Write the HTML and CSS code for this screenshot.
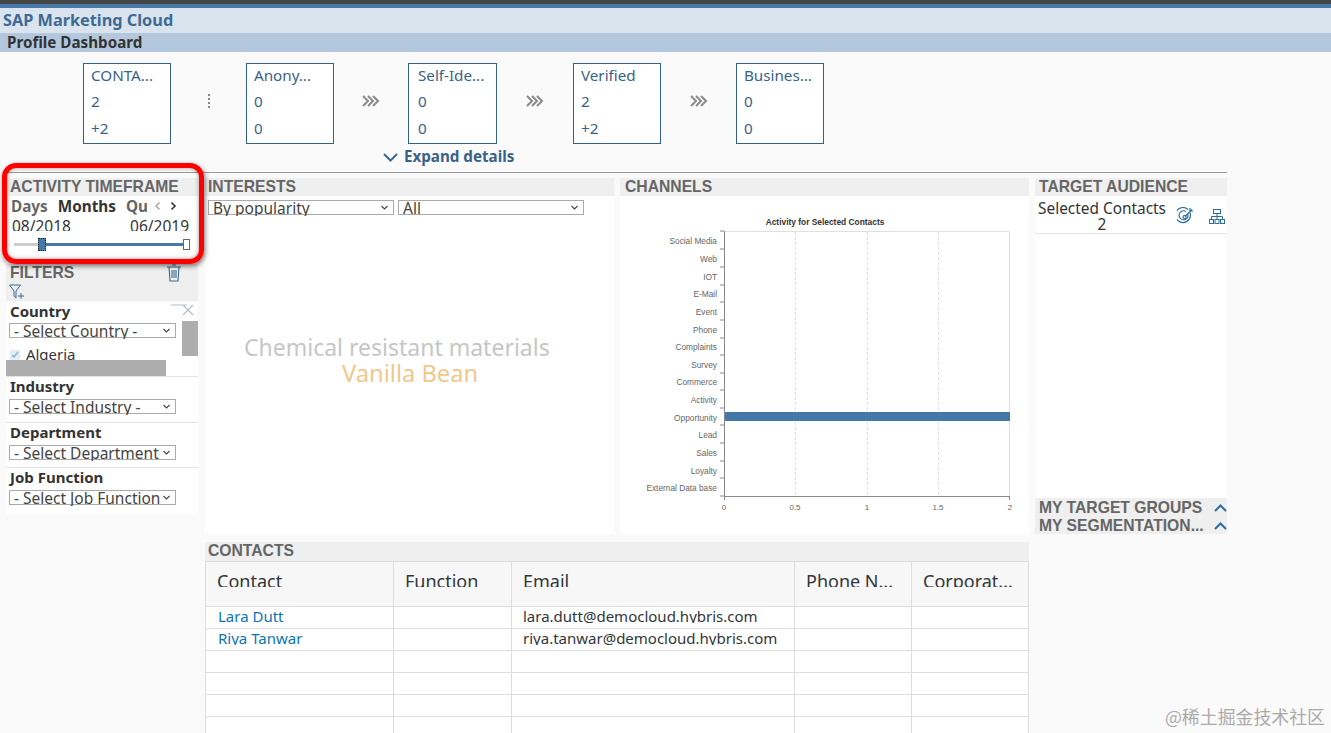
FILE: index.html
```html
<!DOCTYPE html>
<html lang="en">
<head>
    <meta charset="UTF-8">
    <title>Profile Dashboard</title>
    <link rel="stylesheet" href="styles.css">
</head>
<body>
    <div class="topline"></div>
    <div class="shell-title">SAP Marketing Cloud</div>
    <div class="page-title">Profile Dashboard</div>

    <div class="funnel">
        <div class="stage"><span>CONTA...</span><span>2</span><span>+2</span></div>
        <div class="step">
            <svg width="4" height="16" viewBox="0 0 4 16"><path d="M1 1h2v2H1zM1 5h2v2H1zM1 9h2v2H1zM1 13h2v2H1z" fill="#888"/></svg>
        </div>
        <div class="stage"><span>Anony...</span><span>0</span><span>0</span></div>
        <div class="step step-narrow">
            <svg width="18" height="12" viewBox="0 0 18 12"><path d="M1 1l5 5-5 5M6 1l5 5-5 5M11 1l5 5-5 5" fill="none" stroke="#8a8a8a" stroke-width="2"/></svg>
        </div>
        <div class="stage stage-wide"><span>Self-Ide...</span><span>0</span><span>0</span></div>
        <div class="step step-wide">
            <svg width="18" height="12" viewBox="0 0 18 12"><path d="M1 1l5 5-5 5M6 1l5 5-5 5M11 1l5 5-5 5" fill="none" stroke="#8a8a8a" stroke-width="2"/></svg>
        </div>
        <div class="stage"><span>Verified</span><span>2</span><span>+2</span></div>
        <div class="step">
            <svg width="18" height="12" viewBox="0 0 18 12"><path d="M1 1l5 5-5 5M6 1l5 5-5 5M11 1l5 5-5 5" fill="none" stroke="#8a8a8a" stroke-width="2"/></svg>
        </div>
        <div class="stage"><span>Busines...</span><span>0</span><span>0</span></div>
    </div>

    <div class="expand">
        <svg width="15" height="9" viewBox="0 0 15 9"><path d="M1 1l6.500 6.500L14 1" fill="none" stroke="#3a6a94" stroke-width="2"/></svg>
        Expand details
    </div>

    <div class="board">
        <div class="side">
            <div class="highlight"></div>
            <div class="head">ACTIVITY TIMEFRAME</div>
            <div class="timeframe">
                <div class="tabs">
                    <span class="tab">Days</span>
                    <span class="tab tab-on">Months</span>
                    <span class="tab tab-cut">Quarters</span>
                    <svg class="arrow" width="7" height="10" viewBox="0 0 7 10"><path d="M5.500 1.500L2 5l3.500 3.500" fill="none" stroke="#aaa" stroke-width="1.600"/></svg>
                    <svg class="arrow" width="7" height="10" viewBox="0 0 7 10"><path d="M1.500 1.500L5 5 1.500 8.500" fill="none" stroke="#333" stroke-width="1.600"/></svg>
                </div>
                <div class="dates"><span>08/2018</span><span>06/2019</span></div>
                <div class="slider">
                    <div class="track-off"></div>
                    <div class="track-on"></div>
                    <div class="grip"></div>
                    <div class="grip-end"></div>
                </div>
            </div>

            <div class="filters-head">
                <div class="filters-title">
                    <span>FILTERS</span>
                    <svg width="16" height="18" viewBox="0 0 16 18"><path d="M1 3h14M3 3l1 14h8l1-14M6 1h4M6 6v8M8 6v8M10 6v8" fill="none" stroke="#3a6a94" stroke-width="1.100"/></svg>
                </div>
                <svg class="filter-add" width="17" height="16" viewBox="0 0 17 16"><path d="M.5 1h11L7 7v7L5 12V7zM12 9v6M9 12h6" fill="none" stroke="#3a6a94" stroke-width="1"/></svg>
            </div>

            <div class="filter filter-country">
                <div class="filter-label">Country</div>
                <svg class="close" width="24" height="12" viewBox="0 0 24 12"><path d="M0 1h16M12 1l10 10M22 1L12 11" fill="none" stroke="#b5bcc4" stroke-width="1.200"/></svg>
                <div class="pick"><span>- Select Country -</span><svg width="7" height="5" viewBox="0 0 7 5"><path d="M.5 1l3 3 3-3" fill="none" stroke="#444" stroke-width="1.100"/></svg></div>
                <div class="thumb"></div>
                <div class="check-row">
                    <svg width="10" height="10" viewBox="0 0 10 10"><rect width="10" height="10" fill="#e4edf5"/><path d="M2 5l2 2 4-5" fill="none" stroke="#7fb2de" stroke-width="1.300"/></svg>
                    Algeria
                </div>
                <div class="hbar"></div>
            </div>
            <div class="filter">
                <div class="filter-label">Industry</div>
                <div class="pick"><span>- Select Industry -</span><svg width="7" height="5" viewBox="0 0 7 5"><path d="M.5 1l3 3 3-3" fill="none" stroke="#444" stroke-width="1.100"/></svg></div>
            </div>
            <div class="filter">
                <div class="filter-label">Department</div>
                <div class="pick"><span>- Select Department -</span><svg width="7" height="5" viewBox="0 0 7 5"><path d="M.5 1l3 3 3-3" fill="none" stroke="#444" stroke-width="1.100"/></svg></div>
            </div>
            <div class="filter">
                <div class="filter-label">Job Function</div>
                <div class="pick"><span>- Select Job Function -</span><svg width="7" height="5" viewBox="0 0 7 5"><path d="M.5 1l3 3 3-3" fill="none" stroke="#444" stroke-width="1.100"/></svg></div>
            </div>
        </div>

        <div class="panel">
            <div class="head">INTERESTS</div>
            <div class="interest-body">
                <div class="interest-picks">
                    <div class="pick pick-wide"><span>By popularity</span><svg width="7" height="5" viewBox="0 0 7 5"><path d="M.5 1l3 3 3-3" fill="none" stroke="#444" stroke-width="1.100"/></svg></div>
                    <div class="pick pick-wide"><span>All</span><svg width="7" height="5" viewBox="0 0 7 5"><path d="M.5 1l3 3 3-3" fill="none" stroke="#444" stroke-width="1.100"/></svg></div>
                </div>
                <div class="cloud">
                    <div class="word">Chemical resistant materials</div>
                    <div class="word word-accent">Vanilla Bean</div>
                </div>
            </div>
        </div>

        <div class="panel">
            <div class="head head-channels">CHANNELS</div>
            <div class="chart-body">
                <svg class="chart" width="409" height="337" viewBox="620 197 409 337">
                    <text class="chart-title" x="825" y="225">Activity for Selected Contacts</text>
                    <path d="M724.500 231.500H1009.500V496" fill="none" stroke="#e0e0e0"/>
                    <path d="M795.500 232V496M867.500 232V496M938.500 232V496" fill="none" stroke="#ddd" stroke-dasharray="3 2"/>
                    <rect x="724" y="412" width="286" height="9" fill="#4478a8"/>
                    <path d="M724.500 231v265.500H1010M724 231h-4M724 249h-4M724 267h-4M724 285h-4M724 302h-4M724 320h-4M724 338h-4M724 355h-4M724 373h-4M724 390h-4M724 408h-4M724 425h-4M724 443h-4M724 461h-4M724 478h-4M724 496h-4M724.500 496v4M1009.500 496v4" fill="none" stroke="#888"/>
                    <g class="chart-y">
                        <text x="717" y="244">Social Media</text>
                        <text x="717" y="262">Web</text>
                        <text x="717" y="280">IOT</text>
                        <text x="717" y="297">E-Mail</text>
                        <text x="717" y="315">Event</text>
                        <text x="717" y="333">Phone</text>
                        <text x="717" y="350">Complaints</text>
                        <text x="717" y="368">Survey</text>
                        <text x="717" y="385">Commerce</text>
                        <text x="717" y="403">Activity</text>
                        <text x="717" y="421">Opportunity</text>
                        <text x="717" y="438">Lead</text>
                        <text x="717" y="456">Sales</text>
                        <text x="717" y="474">Loyalty</text>
                        <text x="717" y="491">External Data base</text>
                    </g>
                    <g class="chart-x">
                        <text x="724" y="510">0</text>
                        <text x="795" y="510">0.5</text>
                        <text x="867" y="510">1</text>
                        <text x="938" y="510">1.5</text>
                        <text x="1010" y="510">2</text>
                    </g>
                </svg>
            </div>
        </div>

        <div class="panel">
            <div class="head head-target">TARGET AUDIENCE</div>
            <div class="audience">
                <div class="audience-top">
                    <div class="selected">Selected Contacts<br>2</div>
                    <svg class="target-icon" width="18" height="18" viewBox="0 0 18 18"><g fill="none" stroke="#2f6c9e" stroke-width="1.200"><path d="M13 5.500A7.500 7.500 0 1 1 11 2.500"/><path d="M11 7.500A4.500 4.500 0 1 1 9 4.500"/><circle cx="7.500" cy="10" r="1.500"/><path d="M8 9.500l7-7M13 1v3h3"/></g></svg>
                    <svg class="tree-icon" width="16" height="15" viewBox="0 0 16 15"><g fill="none" stroke="#2f6c9e"><rect x="4.500" y=".5" width="7" height="4"/><path d="M8 4.500v3M2.500 10V7.500h11V10M8 7.500V10"/><rect x=".5" y="10.500" width="4" height="4"/><rect x="6" y="10.500" width="4" height="4"/><rect x="11.500" y="10.500" width="4" height="4"/></g></svg>
                </div>
            </div>
            <div class="head head-fold">
                <span>MY TARGET GROUPS</span>
                <svg width="13" height="8" viewBox="0 0 13 8"><path d="M1 7l5.500-5.500L12 7" fill="none" stroke="#2f6c9e" stroke-width="2"/></svg>
            </div>
            <div class="head head-fold">
                <span>MY SEGMENTATION...</span>
                <svg width="13" height="8" viewBox="0 0 13 8"><path d="M1 7l5.500-5.500L12 7" fill="none" stroke="#2f6c9e" stroke-width="2"/></svg>
            </div>
        </div>

        <div class="contacts">
            <div class="head">CONTACTS</div>
            <table class="grid">
                <thead>
                    <tr><th class="col-name"><div>Contact</div></th><th class="col-func"><div>Function</div></th><th class="col-mail"><div>Email</div></th><th class="col-phone"><div>Phone N...</div></th><th><div>Corporat...</div></th></tr>
                </thead>
                <tbody>
                    <tr><td><div><a href="#">Lara Dutt</a></div></td><td></td><td><div class="mail">lara.dutt@democloud.hybris.com</div></td><td></td><td></td></tr>
                    <tr><td><div><a href="#">Riya Tanwar</a></div></td><td></td><td><div class="mail">riya.tanwar@democloud.hybris.com</div></td><td></td><td></td></tr>
                    <tr><td></td><td></td><td></td><td></td><td></td></tr>
                    <tr><td></td><td></td><td></td><td></td><td></td></tr>
                    <tr><td></td><td></td><td></td><td></td><td></td></tr>
                    <tr><td></td><td></td><td></td><td></td><td></td></tr>
                </tbody>
            </table>
        </div>
    </div>

    <div class="watermark">@稀土掘金技术社区</div>
</body>
</html>
```

FILE: styles.css
```css
body {
    margin: 0;
    height: 733px;
    overflow: hidden;
    background: #fafafa;
    font-family: "Noto Sans", sans-serif;
    font-size: 15px;
    color: #32363a;
    position: relative;
}

.topline {
    height: 4px;
    background: #454545;
    border-bottom: 4px solid #4679a8;
}

.shell-title {
    height: 25px;
    line-height: 25px;
    padding-left: 3px;
    background: #d9e4ef;
    color: #3f6a94;
    font-size: 16.300px;
    font-weight: 700;
}

.page-title {
    height: 19px;
    line-height: 19px;
    padding-left: 7px;
    background: #b4c8dd;
    color: #333;
    font-size: 15.200px;
    font-weight: 700;
}

/* funnel */
.funnel {
    display: flex;
    margin: 11px 0 0 83px;
}

.stage {
    width: 88px;
    height: 81px;
    box-sizing: border-box;
    border: 1px solid #346187;
    background: #fff;
    padding: 0 0 0 7px;
    color: #3a6288;
    display: flex;
    flex-direction: column;
    font-size: 15.200px;
}

.stage-wide {
    width: 89px;
    padding-left: 9px;
}

.stage span {
    height: 26.500px;
    line-height: 23px;
}

.step {
    width: 75px;
    display: flex;
    align-items: center;
    justify-content: center;
    padding-bottom: 5px;
    box-sizing: border-box;
}

.step-narrow {
    width: 74px;
}

.step-wide {
    width: 76px;
}

.expand {
    height: 19px;
    margin-top: 3px;
    padding-left: 383px;
    line-height: 19px;
    color: #3a6288;
    font-size: 15.200px;
    font-weight: 700;
}

.expand svg {
    margin-right: 2px;
}

/* board */
.board {
    display: grid;
    grid-template-columns: 193px 409px 409px 192px;
    grid-template-rows: 356px auto;
    column-gap: 6px;
    row-gap: 8px;
    width: 1221px;
    margin: 6px 0 0 6px;
    padding-top: 5px;
    border-top: 1px solid #999;
}

.head {
    height: 18px;
    line-height: 18px;
    padding-left: 3px;
    background: #efefef;
    color: #666;
    font-family: "Liberation Sans", sans-serif;
    font-size: 15.700px;
    font-weight: 700;
    white-space: nowrap;
}

.head-channels {
    padding-left: 5px;
}

.head-target {
    padding-left: 4px;
}

.side {
    width: 192px;
    position: relative;
}

.side .head {
    padding-left: 4px;
}

.highlight {
    position: absolute;
    left: -4px;
    top: -15px;
    width: 192px;
    height: 91px;
    border: 5px solid #f00;
    border-radius: 14px;
    box-shadow: 1px 2px 5px rgba(0, 0, 0, 0.55), inset 0 0 4px rgba(0, 0, 0, 0.4);
    z-index: 2;
}

.timeframe {
    height: 68px;
    background: #fff;
    overflow: hidden;
}

.tabs {
    display: flex;
    align-items: center;
    height: 20px;
    padding-left: 5px;
    font-weight: 700;
    font-size: 15.300px;
    color: #666;
}

.tab {
    margin-right: 10px;
}

.tab-on {
    color: #333;
}

.tab-cut {
    width: 21px;
    overflow: hidden;
    margin-right: 7px;
    white-space: nowrap;
}

.arrow {
    margin-right: 9px;
}

.dates {
    display: flex;
    justify-content: space-between;
    padding: 0 9px 0 6px;
    height: 15px;
    line-height: 20px;
    overflow: hidden;
    font-size: 15.500px;
}

.slider {
    position: relative;
    height: 14px;
    margin-top: 6px;
}

.track-off {
    position: absolute;
    left: 8px;
    top: 6px;
    width: 26px;
    height: 3px;
    background: #ccc;
}

.track-on {
    position: absolute;
    left: 36px;
    top: 6px;
    width: 143px;
    height: 3px;
    background: #4679a8;
}

.grip {
    position: absolute;
    left: 32px;
    top: 1px;
    width: 6px;
    height: 11px;
    background: #4679a8;
    border: 1px dotted #222;
}

.grip-end {
    position: absolute;
    left: 177px;
    top: 2px;
    width: 5px;
    height: 9px;
    background: #fff;
    border: 1px solid #666;
}

.filters-head {
    height: 37px;
    background: #efefef;
    padding: 0 0 0 4px;
    box-sizing: border-box;
}

.filters-title {
    display: flex;
    justify-content: space-between;
    align-items: center;
    height: 17px;
    padding-right: 16px;
    color: #666;
    font-family: "Liberation Sans", sans-serif;
    font-size: 15.700px;
    font-weight: 700;
}

.filter-add {
    display: block;
    margin: 3px 0 0 -1px;
}

.filter {
    position: relative;
    background: #fff;
    height: 45.500px;
    box-sizing: border-box;
    padding: 0 0 0 3px;
    border-bottom: 1px solid #e2e2e2;
}

.filter:last-child {
    border-bottom: 0;
}

.filter-country {
    height: 75px;
    margin-top: 1px;
    overflow: hidden;
}

.filter-label {
    height: 22px;
    line-height: 19px;
    padding-left: 1px;
    font-weight: 700;
    color: #333;
}

.filter-country .filter-label {
    height: 21px;
}

.pick {
    display: flex;
    align-items: flex-start;
    width: 167px;
    height: 15px;
    padding: 0 5px 0 4px;
    box-sizing: border-box;
    border: 1px solid #aaa;
    background: #fff;
    font-size: 15.500px;
    line-height: 14px;
    color: #444;
}

.pick span {
    flex: 1;
    height: 15px;
    overflow: hidden;
    white-space: nowrap;
}

.pick svg {
    align-self: center;
    margin-left: 2px;
}

.pick-wide {
    width: 186px;
}

.close {
    position: absolute;
    right: 3px;
    top: 2px;
}

.thumb {
    position: absolute;
    right: 0;
    top: 19px;
    width: 16px;
    height: 35px;
    background: #adadad;
}

.check-row {
    margin: 7px 0 0 1px;
    line-height: 18px;
}

.check-row svg {
    margin-right: 2px;
}

.hbar {
    position: absolute;
    left: 0;
    bottom: 0;
    width: 160px;
    height: 16px;
    background: #adadad;
}

/* middle panels */
.panel {
    display: flex;
    flex-direction: column;
}

.interest-body {
    flex: 1;
    background: #fff;
    padding: 4px 0 0 3px;
    box-sizing: border-box;
}

.interest-picks {
    display: flex;
    gap: 4px;
}

.cloud {
    padding-top: 119px;
    font-size: 23px;
    line-height: 26px;
}

.word {
    margin-left: 36px;
    color: #c6c6c6;
}

.word-accent {
    margin-left: 134px;
    font-size: 23.700px;
    color: #f0c88c;
}

.chart-body {
    flex: 1;
    background: #fff;
}

.chart {
    display: block;
    margin-top: 1px;
    font-family: "Liberation Sans", sans-serif;
}

.chart-title {
    font-size: 8.400px;
    font-weight: 700;
    fill: #333;
    text-anchor: middle;
}

.chart-y text {
    font-size: 8.300px;
    fill: #666;
    text-anchor: end;
}

.chart-x text {
    font-size: 8px;
    fill: #666;
    text-anchor: middle;
}

.audience {
    flex: 1;
    background: #fff;
}

.audience-top {
    display: flex;
    align-items: flex-start;
    height: 38px;
    border-bottom: 1px solid #e2e2e2;
    padding-top: 5px;
    box-sizing: border-box;
}

.selected {
    width: 134px;
    text-align: center;
    line-height: 16px;
    font-size: 15.400px;
    color: #333;
    white-space: nowrap;
}

.target-icon {
    margin: 6px 0 0 8px;
}

.tree-icon {
    margin: 8px 0 0 14px;
}

.head-fold {
    display: flex;
    justify-content: space-between;
    align-items: center;
    height: 16px;
    padding: 2px 0 0 4px;
}

/* contacts */
.contacts {
    grid-column: 2 / 4;
}

.contacts .head {
    height: 19px;
}

.grid {
    width: 100%;
    border-collapse: collapse;
    table-layout: fixed;
    background: #fff;
}

.grid th {
    height: 44px;
    padding: 0;
    background: #f7f7f7;
    border-right: 1px solid #ddd;
    border-left: 1px solid #ddd;
    border-top: 1px solid #ddd;
    font-size: 18px;
    font-weight: 400;
    text-align: left;
    vertical-align: top;
}

.grid th div {
    height: 18px;
    margin: 7px 0 0 11px;
    line-height: 24px;
    overflow: hidden;
    white-space: nowrap;
}

.col-name {
    width: 187px;
}

.col-func {
    width: 117px;
}

.col-mail {
    width: 282px;
}

.col-phone {
    width: 116px;
}

.grid td {
    height: 21px;
    padding: 0;
    border: 1px solid #ddd;
    vertical-align: top;
}

.grid td div {
    height: 14px;
    margin-top: 2px;
    padding-left: 12px;
    line-height: 15px;
    overflow: hidden;
    white-space: nowrap;
}

.grid td .mail {
    padding-left: 11px;
}

.grid a {
    color: #0b74b8;
    text-decoration: none;
}

.watermark {
    position: absolute;
    right: 6px;
    bottom: 7px;
    color: #aaa;
    font-family: "Noto Sans CJK SC", sans-serif;
    font-size: 17.900px;
    line-height: 20px;
}
```
